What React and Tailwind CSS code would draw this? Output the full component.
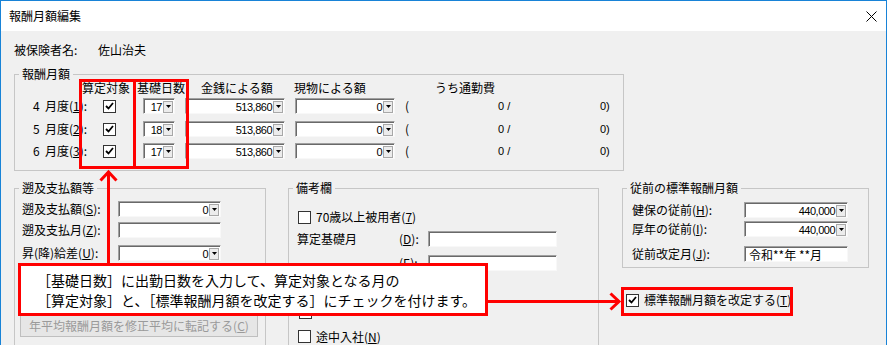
import React from 'react';

const ui = { fontFamily: '"Noto Sans CJK JP", "Noto Sans", sans-serif' };
const num = { fontFamily: '"Liberation Sans", Arial, sans-serif' };

const Arrow = () => (
  <div className="w-[10px] h-[12px] mr-[1px] border border-[#a8a8a8] bg-[#ececec] flex items-center justify-center shrink-0">
    <svg width="5" height="3" viewBox="0 0 5 3">
      <path d="M0 0h5L2.5 3z" fill="#000" />
    </svg>
  </div>
);

const Combo = ({ w, value }) => (
  <div className={`flex h-[16px] ${w} border border-t-[#a0a0a0] border-l-[#a0a0a0] border-b-[#f8f8f8] border-r-[#f8f8f8] shrink-0`}>
    <div className="flex flex-1 items-center bg-white border-t border-l border-[#696969]">
      <span className="flex-1 text-right pr-[1px] text-[11px] leading-[14px] tracking-[-0.5px]" style={num}>
        {value}
      </span>
      <Arrow />
    </div>
  </div>
);

const TextBox = ({ w, children }) => (
  <div className={`flex h-[16px] ${w} border border-t-[#a0a0a0] border-l-[#a0a0a0] border-b-[#f8f8f8] border-r-[#f8f8f8] shrink-0`}>
    <div className="flex flex-1 items-center bg-white border-t border-l border-[#696969] pl-[3px] text-[12px] leading-[14px]">
      {children}
    </div>
  </div>
);

const Check = ({ checked }) => (
  <div className="w-[13px] h-[13px] border border-[#333] bg-white flex items-center justify-center shrink-0">
    {checked && (
      <svg width="9" height="8" viewBox="0 0 9 8">
        <path d="M1 4l2.5 2.5L8 1" fill="none" stroke="#000" strokeWidth="1.8" />
      </svg>
    )}
  </div>
);

const Group = ({ title, className, children }) => (
  <fieldset className={`border border-[#c6c6c6] shrink-0 ${className}`}>
    <legend className="ml-[4px] px-[3px] text-[12px] leading-[14px]">{title}</legend>
    {children}
  </fieldset>
);

const rows = [
  { m: '4', k: '1', days: '17', mt: 'mt-[3px]' },
  { m: '5', k: '2', days: '18', mt: 'mt-[7px]' },
  { m: '6', k: '3', days: '17', mt: 'mt-[6px]' },
];

export default function App() {
  return (
    <div className="relative w-[887px] h-[345px] overflow-hidden text-black" style={ui}>
      <div className="w-[887px] h-[345px] bg-[#f0f0f0] border-x border-t border-[#1883d7]">
        {/* title bar */}
        <div className="h-[30px] bg-white flex items-center justify-between pl-[8px] pr-[9px]">
          <span className="text-[12px]">報酬月額編集</span>
          <svg width="11" height="11" viewBox="0 0 11 11">
            <path d="M0.5 0.5l10 10M10.5 0.5l-10 10" stroke="#000" strokeWidth="1" />
          </svg>
        </div>

        <div className="pl-[13px] text-[12px]">
          <div className="mt-[11px] flex h-[16px] items-center">
            <span className="w-[84px]">被保険者名:</span>
            <span>佐山治夫</span>
          </div>

          {/* 報酬月額 */}
          <Group title="報酬月額" className="mt-[9px] w-[610px] h-[104px]">
            <div className="flex h-[14px] items-center leading-[14px]">
              <span className="w-[67px]" />
              <span className="w-[55px]">算定対象</span>
              <span className="w-[64px]">基礎日数</span>
              <span className="w-[93px]">金銭による額</span>
              <span className="w-[141px]">現物による額</span>
              <span>うち通勤費</span>
            </div>
            {rows.map((r) => (
              <div key={r.m} className={`flex h-[16px] items-center ${r.mt}`}>
                <div className="w-[88px] pl-[18px] flex">
                  <span className="w-[12px]">{r.m}</span>
                  <span>
                    月度(<span className="underline">{r.k}</span>):
                  </span>
                </div>
                <div className="w-[40px]">
                  <Check checked />
                </div>
                <div className="w-[42px]">
                  <Combo w="w-[32px]" value={r.days} />
                </div>
                <div className="w-[110px]">
                  <Combo w="w-[100px]" value="513,860" />
                </div>
                <div className="w-[110px]">
                  <Combo w="w-[100px]" value="0" />
                </div>
                <span className="w-[93px]">(</span>
                <span className="w-[102px] text-[11px]" style={num}>0 /</span>
                <span className="text-[11px]" style={num}>0)</span>
              </div>
            ))}
          </Group>

          {/* lower panels */}
          <div className="flex items-start mt-[10px]">
            <Group title="遡及支払額等" className="w-[252px] h-[200px]">
              <div className="flex h-[16px] items-center mt-[6px]">
                <span className="w-[103px] pl-[7px]">遡及支払額(<span className="underline">S</span>):</span>
                <Combo w="w-[103px]" value="0" />
              </div>
              <div className="flex h-[16px] items-center mt-[5px]">
                <span className="w-[103px] pl-[7px]">遡及支払月(<span className="underline">Z</span>):</span>
                <TextBox w="w-[103px]" />
              </div>
              <div className="flex h-[16px] items-center mt-[7px]">
                <span className="w-[103px] pl-[7px]">昇(降)給差(<span className="underline">U</span>):</span>
                <Combo w="w-[103px]" value="0" />
              </div>
              <button
                disabled
                className="mt-[54px] ml-[5px] w-[238px] h-[22px] border border-[#bfbfbf] bg-[#e6e6e6] text-[#9a9a9a] text-[12px] flex items-center justify-center"
              >
                年平均報酬月額を修正平均に転記する(<span className="underline">C</span>)
              </button>
            </Group>

            <Group title="備考欄" className="ml-[22px] w-[311px] h-[200px]">
              <div className="flex h-[16px] items-center mt-[14px] pl-[9px]">
                <Check />
                <span className="ml-[5px]">70歳以上被用者(<span className="underline">7</span>)</span>
              </div>
              <div className="flex h-[16px] items-center mt-[6px]">
                <span className="w-[110px] pl-[8px]">算定基礎月</span>
                <span className="w-[29px]">(<span className="underline">D</span>):</span>
                <TextBox w="w-[129px]" />
              </div>
              <div className="flex h-[16px] items-center mt-[8px]">
                <span className="w-[110px] pl-[8px]" />
                <span className="w-[29px]">(<span className="underline">E</span>):</span>
                <TextBox w="w-[129px]" />
              </div>
              <div className="flex h-[13px] items-center mt-[35px] pl-[10px]">
                <Check />
              </div>
              <div className="flex h-[13px] items-center mt-[11px] pl-[9px]">
                <Check />
                <span className="ml-[5px]">途中入社(<span className="underline">N</span>)</span>
              </div>
            </Group>

            <div className="ml-[23px] flex flex-col">
              <Group title="従前の標準報酬月額" className="w-[247px] h-[87px]">
                <div className="flex h-[16px] items-center mt-[7px]">
                  <span className="w-[121px] pl-[9px]">健保の従前(<span className="underline">H</span>):</span>
                  <Combo w="w-[104px]" value="440,000" />
                </div>
                <div className="flex h-[16px] items-center mt-[3px]">
                  <span className="w-[121px] pl-[9px]">厚年の従前(<span className="underline">I</span>):</span>
                  <Combo w="w-[104px]" value="440,000" />
                </div>
                <div className="flex h-[16px] items-center mt-[9px]">
                  <span className="w-[121px] pl-[9px]">従前改定月(<span className="underline">J</span>):</span>
                  <TextBox w="w-[104px]">令和**年 **月</TextBox>
                </div>
              </Group>
              <div className="flex h-[16px] items-center mt-[24px] pl-[4px]">
                <Check checked />
                <span className="ml-[5px]">標準報酬月額を改定する(<span className="underline">T</span>)</span>
              </div>
            </div>
          </div>
        </div>
      </div>

      {/* annotations */}
      <div className="absolute left-[79px] top-[79px] w-[57px] h-[90px] border-[3px] border-[#ff0000]" />
      <div className="absolute left-[133px] top-[79px] w-[56px] h-[90px] border-[3px] border-[#ff0000]" />
      <div className="absolute left-[621px] top-[287px] w-[172px] h-[29px] border-[3px] border-[#ff0000]" />

      <div className="absolute left-[18px] top-[263px] w-[470px] h-[53px] border-[3px] border-[#ff0000] bg-white pl-[16px] pt-[4px] text-[14px] leading-[20px]">
        <p>［基礎日数］に出勤日数を入力して、算定対象となる月の</p>
        <p>［算定対象］と、［標準報酬月額を改定する］にチェックを付けます。</p>
      </div>

      <svg className="absolute left-0 top-0 pointer-events-none" width="887" height="345">
        <path d="M108.5 263V172" stroke="#ff0000" strokeWidth="3" />
        <path d="M100.5 180.5l8-8.5 8 8.5" fill="none" stroke="#ff0000" strokeWidth="3" />
        <path d="M488 301.5H618" stroke="#ff0000" strokeWidth="3" />
        <path d="M610.5 293.5l8.5 8-8.5 8" fill="none" stroke="#ff0000" strokeWidth="3" />
      </svg>
    </div>
  );
}
